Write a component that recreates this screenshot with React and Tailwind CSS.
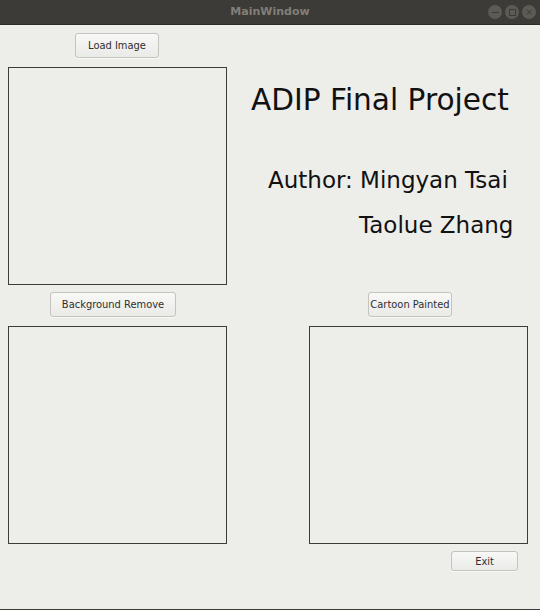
import React from 'react';

const font = { fontFamily: '"DejaVu Sans", sans-serif' };

function QtButton({ children, className = '' }) {
    return (
        <button
            type="button"
            className={`flex items-center justify-center pt-[2px] rounded-[3px] border border-[#c4c3bf] bg-gradient-to-b from-[#f8f8f7] to-[#eaeae7] text-[11px] text-[#2f2f2f] shadow-[0_1px_0_rgba(255,255,255,0.6)] [font-stretch:condensed] ${className}`}
        >
            {children}
        </button>
    );
}

function ImageBox({ className = '' }) {
    return <div className={`w-[219px] h-[218px] border border-[#3c3c3c] ${className}`}></div>;
}

export default function App() {
    return (
        <div className="w-[540px] h-[610px] flex flex-col bg-[#ededea] overflow-hidden" style={font}>
            {/* title bar */}
            <div className="h-[25px] bg-[#3c3b37] flex items-center relative shrink-0 border-b border-[#2c2b28]">
                <div className="flex-1 text-center text-[11px] font-bold text-[#827f79]">MainWindow</div>
                <div className="absolute right-[4px] top-[5px] flex gap-[3px]">
                    <div className="w-[14px] h-[14px] rounded-full bg-[#5b5a55] flex items-center justify-center">
                        <div className="w-[7px] h-[1px] bg-[#3c3b37]"></div>
                    </div>
                    <div className="w-[14px] h-[14px] rounded-full bg-[#5b5a55] flex items-center justify-center">
                        <div className="w-[7px] h-[7px] border border-[#3c3b37]"></div>
                    </div>
                    <div className="w-[14px] h-[14px] rounded-full bg-[#5b5a55] flex items-center justify-center text-[9px] leading-none text-[#3c3b37]">
                        ×
                    </div>
                </div>
            </div>

            <div className="flex-1 flex flex-col">
                {/* top row */}
                <div className="flex">
                    <div className="ml-[8px] pt-[8px] flex flex-col">
                        <QtButton className="ml-[67px] w-[84px] h-[25px]">Load Image</QtButton>
                        <ImageBox className="mt-[9px]" />
                    </div>
                    <div className="flex flex-col text-[#111]">
                        <div className="ml-[24px] mt-[61px] text-[29.6px] leading-none whitespace-nowrap">ADIP Final Project</div>
                        <div className="ml-[41px] mt-[53px] text-[23px] leading-none whitespace-nowrap">Author: Mingyan Tsai</div>
                        <div className="ml-[132px] mt-[22px] text-[23px] leading-none whitespace-nowrap">Taolue Zhang</div>
                    </div>
                </div>

                {/* button row */}
                <div className="flex mt-[7px]">
                    <QtButton className="ml-[50px] w-[126px] h-[25px]">Background Remove</QtButton>
                    <QtButton className="ml-[192px] w-[84px] h-[25px]">Cartoon Painted</QtButton>
                </div>

                {/* bottom boxes */}
                <div className="flex mt-[9px]">
                    <ImageBox className="ml-[8px]" />
                    <ImageBox className="ml-[82px]" />
                </div>

                <div className="flex mt-[7px]">
                    <QtButton className="ml-[451px] w-[67px] h-[20px]">Exit</QtButton>
                </div>
            </div>
            <div className="h-[1px] bg-[#3c3b37] shrink-0"></div>
        </div>
    );
}
